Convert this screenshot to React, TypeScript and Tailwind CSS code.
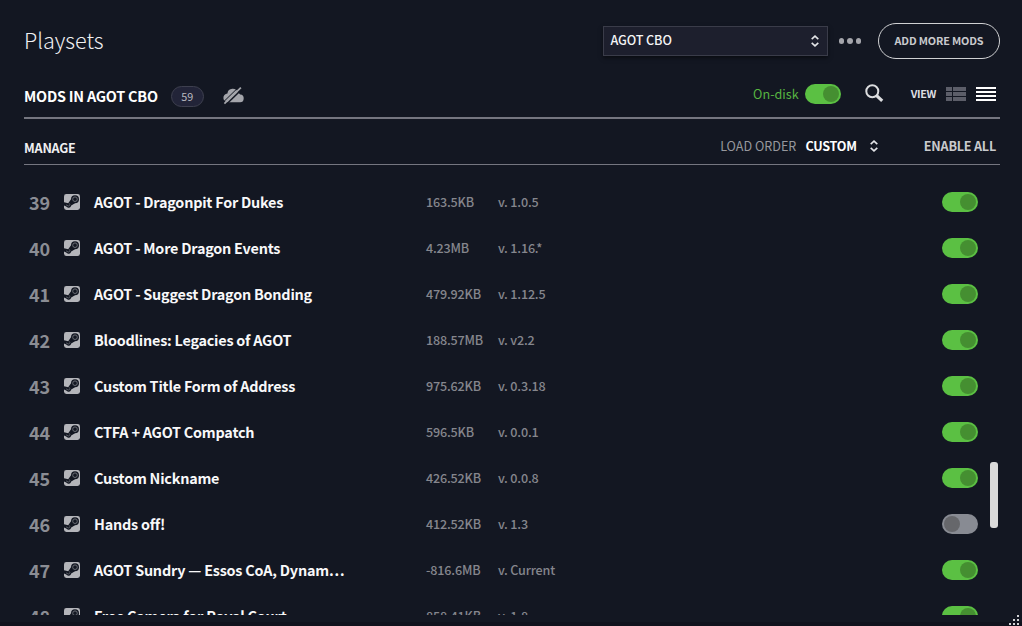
type Mod = {
  position: number;
  name: string;
  size: string;
  version: string;
  enabled: boolean;
};

const mods: Mod[] = [
  { position: 39, name: "AGOT - Dragonpit For Dukes", size: "163.5KB", version: "v. 1.0.5", enabled: true },
  { position: 40, name: "AGOT - More Dragon Events", size: "4.23MB", version: "v. 1.16.*", enabled: true },
  { position: 41, name: "AGOT - Suggest Dragon Bonding", size: "479.92KB", version: "v. 1.12.5", enabled: true },
  { position: 42, name: "Bloodlines: Legacies of AGOT", size: "188.57MB", version: "v. v2.2", enabled: true },
  { position: 43, name: "Custom Title Form of Address", size: "975.62KB", version: "v. 0.3.18", enabled: true },
  { position: 44, name: "CTFA + AGOT Compatch", size: "596.5KB", version: "v. 0.0.1", enabled: true },
  { position: 45, name: "Custom Nickname", size: "426.52KB", version: "v. 0.0.8", enabled: true },
  { position: 46, name: "Hands off!", size: "412.52KB", version: "v. 1.3", enabled: false },
  { position: 47, name: "AGOT Sundry — Essos CoA, Dynam…", size: "-816.6MB", version: "v. Current", enabled: true },
  { position: 48, name: "Free Camera for Royal Court", size: "858.41KB", version: "v. 1.8", enabled: true },
];

function Toggle({ on }: { on: boolean }) {
  return (
    <button
      aria-pressed={on}
      className={
        on
          ? "flex h-5 w-9 shrink-0 items-center justify-end rounded-full bg-[#5bc043] px-0.5"
          : "flex h-5 w-9 shrink-0 items-center justify-start rounded-full bg-[#888b93] px-0.5"
      }
    >
      <span className={on ? "size-4 rounded-full bg-[#458f31]" : "size-4 rounded-full bg-[#66676b]"} />
    </button>
  );
}

function Chevrons({ className }: { className: string }) {
  return (
    <svg viewBox="0 0 10 12" className={className} fill="none" stroke="#e4e5e8" strokeWidth="1.6">
      <path d="M1.7 4.2 5 1.2l3.3 3M1.7 7.8 5 10.8l3.3-3" />
    </svg>
  );
}

function SteamIcon() {
  return (
    <svg viewBox="0 0 16 16" className="size-4" fill="none">
      <rect width="16" height="16" rx="2.4" fill="#b4b5ba" />
      <path d="M0 8.2 4.2 9.2 7.2 5 11 9.2 7.2 11.4A2.8 2.8 0 0 1 2.2 12.6L0 11.4Z" fill="#131722" />
      <circle cx="11" cy="5.2" r="4" fill="#131722" />
      <circle cx="11" cy="5.2" r="2.3" stroke="#7b7d85" strokeWidth=".8" />
      <path d="M2 10.8 4.4 12a1.5 1.5 0 0 0 1-2.6" stroke="#7b7d85" strokeWidth=".6" />
    </svg>
  );
}

function CloudOff() {
  return (
    <svg viewBox="0 0 22 18" className="h-[18px] w-[22px]">
      <path
        d="M5.4 15.6A4.4 4.4 0 0 1 4.6 6.8 5.3 5.3 0 0 1 15 6.2a4 4 0 0 1 2.4 1.8 3.8 3.8 0 0 1-.6 7.6Z"
        fill="#a4a5ab"
        transform="translate(.8 -.4)"
      />
      <path d="M3.9 17.7 20.4 1.6" stroke="#131722" strokeWidth="1.5" />
      <path d="M1.2 15.2 17.6-.8" stroke="#131722" strokeWidth="1" />
      <path d="M2.4 16.6 18.9 .6" stroke="#a4a5ab" strokeWidth="1.7" />
    </svg>
  );
}

function Header() {
  return (
    <header className="flex h-9 items-center">
      <h1 className="-mt-0.5 text-[21.6px] leading-9 font-light text-[#f0f0f2]">Playsets</h1>
      <button className="ml-auto flex h-[30px] w-[225px] items-center justify-between border border-[#3a3c49] bg-[#1d1f2d] pr-[7px] pl-[7px] shadow-[0_2px_4px_rgba(0,0,0,0.5)]">
        <span className="pb-[3px] text-[12.6px] leading-5 font-medium tracking-[-0.12px] text-[#f4f4f5]">AGOT CBO</span>
        <Chevrons className="h-3 w-[10px]" />
      </button>
      <button aria-label="More" className="ml-[11px] flex gap-[3px]">
        <span className="size-[5.5px] rounded-full bg-[#a5a6ac]" />
        <span className="size-[5.5px] rounded-full bg-[#a5a6ac]" />
        <span className="size-[5.5px] rounded-full bg-[#a5a6ac]" />
      </button>
      <button className="ml-[17px] h-9 w-[122px] rounded-full border border-[#d0d1d3] pb-0.5 text-[10.8px] leading-5 font-bold tracking-[-0.15px] text-[#c9cacd]">
        ADD MORE MODS
      </button>
    </header>
  );
}

function Toolbar() {
  return (
    <div className="mt-[14px] flex h-[46px] items-center border-b-2 border-[#757680]">
      <h2 className="mt-0.5 text-[14.4px] leading-5 font-bold tracking-[-0.22px] text-white">MODS IN AGOT CBO</h2>
      <span className="mt-0.5 ml-[13px] flex h-[21px] w-[33px] items-center justify-center rounded-full border border-[#3e404f] bg-[#222438] text-[10.8px] leading-5 text-[#b9bac0]">
        59
      </span>
      <span className="mt-0.5 ml-[18px]">
        <CloudOff />
      </span>
      <div className="mb-[2px] ml-auto flex items-center">
        <span className="-mt-px text-[12.6px] leading-5 text-[#57b541]">On-disk</span>
        <span className="ml-1.5">
          <Toggle on />
        </span>
        <svg viewBox="0 0 20 20" className="ml-[23px] size-5" fill="none" stroke="#dcdddf">
          <circle cx="8.3" cy="7.2" r="6" strokeWidth="2" />
          <path d="m12.6 11.7 5.6 5.2" strokeWidth="3.2" />
        </svg>
        <span className="-mt-0.5 ml-[27px] text-[10.8px] leading-5 font-bold tracking-[-0.35px] text-[#dddee1]">
          VIEW
        </span>
        <svg viewBox="0 0 20 14" className="ml-[10px] h-[14px] w-5" fill="#5c5e69">
          <path d="M0 0h6v4H0zM7 0h13v4H7zM0 5h6v4H0zM7 5h13v4H7zM0 10h6v4H0zM7 10h13v4H7z" />
        </svg>
        <svg viewBox="0 0 20 14" className="mr-1 ml-[10px] h-[14px] w-5" fill="#fff">
          <path d="M0 0h20v2H0zM0 4h20v2H0zM0 8h20v2H0zM0 12h20v2H0z" />
        </svg>
      </div>
    </div>
  );
}

function ListHeader() {
  return (
    <div className="flex h-[46px] items-center border-b border-[#757680] text-[12.6px] leading-5 font-bold tracking-[-0.22px]">
      <span className="mt-3 text-[#f0f0f2]">MANAGE</span>
      <span className="mt-2 ml-auto font-normal tracking-normal text-[#96979d]">LOAD ORDER</span>
      <span className="mt-2 ml-[9px] text-white">CUSTOM</span>
      <Chevrons className="mt-2 ml-3 h-3 w-[10px]" />
      <span className="mt-2 mr-1 ml-[45px] text-[#c9cacd]">ENABLE ALL</span>
    </div>
  );
}

function ModRow({ mod }: { mod: Mod }) {
  return (
    <li className="flex h-[46px] shrink-0 items-center">
      <span className="w-10 pl-[5px] text-[18px] leading-6 font-bold tracking-[-0.2px] text-[#8b8d94]">
        {mod.position}
      </span>
      <span className="w-[30px]">
        <SteamIcon />
      </span>
      <span className="w-[332px] text-[14.4px] leading-6 font-bold tracking-[-0.22px] text-[#f8f8f9]">{mod.name}</span>
      <span className="w-[72px] text-[12.6px] leading-6 font-medium tracking-[-0.18px] text-[#85868d]">{mod.size}</span>
      <span className="text-[12.6px] leading-6 font-medium tracking-[-0.18px] text-[#85868d]">{mod.version}</span>
      <span className="ml-auto">
        <Toggle on={mod.enabled} />
      </span>
    </li>
  );
}

export default function App() {
  return (
    <main className="relative flex h-[626px] w-[1022px] flex-col bg-[#131722] pt-[23px] font-['Noto_Sans_CJK_SC',sans-serif]">
      <div className="mr-[22px] ml-6">
        <Header />
        <Toolbar />
        <ListHeader />
      </div>
      <div className="flex h-[450px] shrink-0 overflow-hidden pr-6 pl-6">
        <ul className="flex grow flex-col pt-[14px]">
          {mods.map((mod) => (
            <ModRow key={mod.position} mod={mod} />
          ))}
        </ul>
        <div className="ml-3 h-full w-2 shrink-0 pt-[297px]">
          <div className="h-[66px] rounded-[3px] bg-[#dadada]" />
        </div>
      </div>
      <div className="mt-auto h-1 bg-[#10121d]" />
      <svg viewBox="0 0 10 10" className="absolute right-[3px] bottom-px size-[10px]" fill="#d0d1d4">
        <path d="M8 0h2v2H8zM4 4h2v2H4zM8 4h2v2H8zM0 8h2v2H0zM4 8h2v2H4zM8 8h2v2H8z" />
      </svg>
    </main>
  );
}
